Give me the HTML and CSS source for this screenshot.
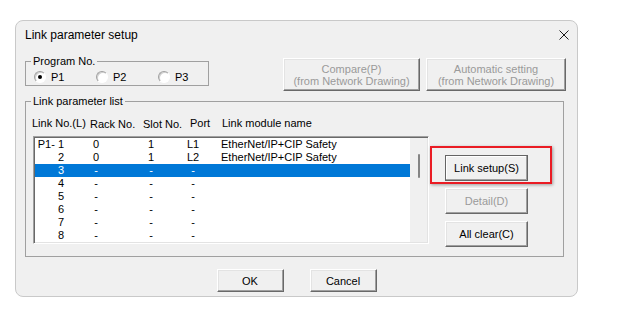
FILE: index.html
```html
<!DOCTYPE html>
<html>
<head>
<meta charset="utf-8">
<link rel="stylesheet" href="styles.css">
</head>
<body>
<div class="dialog">
  <div class="titlebar">
    <span class="title">Link parameter setup</span>
    <svg class="close" width="10" height="10" viewBox="0 0 10 10"><path d="M0.5 0.5 L9.5 9.5 M9.5 0.5 L0.5 9.5" stroke="#1a1a1a" stroke-width="1" fill="none"/></svg>
  </div>
  <div class="toprow">
    <fieldset class="group prog">
      <legend>Program No.</legend>
      <div class="radios">
        <label class="radio"><span class="circle checked"></span>P1</label>
        <label class="radio"><span class="circle"></span>P2</label>
        <label class="radio"><span class="circle"></span>P3</label>
      </div>
    </fieldset>
    <button class="btn disabled compare">Compare(P)<br>(from Network Drawing)</button>
    <button class="btn disabled auto">Automatic setting<br>(from Network Drawing)</button>
  </div>
  <fieldset class="group list">
    <legend>Link parameter list</legend>
    <div class="listarea">
      <div class="leftcol">
        <div class="headers">
          <span class="h h-link">Link No.(L)</span>
          <span class="h h-rack">Rack No.</span>
          <span class="h h-slot">Slot No.</span>
          <span class="h h-port">Port</span>
          <span class="h h-name">Link module name</span>
        </div>
        <div class="listbox">
          <div class="rows">
            <div class="row"><span class="c-num">P1- 1</span><span class="c-mid">0</span><span class="c-mid">1</span><span class="c-mid">L1</span><span class="c-name">EtherNet/IP+CIP Safety</span></div>
            <div class="row"><span class="c-num">2</span><span class="c-mid">0</span><span class="c-mid">1</span><span class="c-mid">L2</span><span class="c-name">EtherNet/IP+CIP Safety</span></div>
            <div class="row selected"><span class="c-num">3</span><span class="c-mid">-</span><span class="c-mid">-</span><span class="c-mid">-</span><span class="c-name"></span></div>
            <div class="row"><span class="c-num">4</span><span class="c-mid">-</span><span class="c-mid">-</span><span class="c-mid">-</span><span class="c-name"></span></div>
            <div class="row"><span class="c-num">5</span><span class="c-mid">-</span><span class="c-mid">-</span><span class="c-mid">-</span><span class="c-name"></span></div>
            <div class="row"><span class="c-num">6</span><span class="c-mid">-</span><span class="c-mid">-</span><span class="c-mid">-</span><span class="c-name"></span></div>
            <div class="row"><span class="c-num">7</span><span class="c-mid">-</span><span class="c-mid">-</span><span class="c-mid">-</span><span class="c-name"></span></div>
            <div class="row"><span class="c-num">8</span><span class="c-mid">-</span><span class="c-mid">-</span><span class="c-mid">-</span><span class="c-name"></span></div>
          </div>
          <div class="vscroll"><div class="thumb"></div></div>
        </div>
      </div>
      <div class="sidebtns">
        <div class="hl">
          <button class="btn side default">Link setup(S)</button>
          <span class="mark"></span>
        </div>
        <button class="btn side disabled">Detail(D)</button>
        <button class="btn side">All clear(C)</button>
      </div>
    </div>
  </fieldset>
  <div class="footer">
    <button class="btn foot">OK</button>
    <button class="btn foot">Cancel</button>
  </div>
</div>
</body>
</html>
```
FILE: styles.css
```css
html, body {
  margin: 0;
  padding: 0;
  background: #ffffff;
}
body {
  font-family: "Liberation Sans", Arial, sans-serif;
  font-size: 11px;
  line-height: 13px;
  color: #000;
}
.dialog {
  box-sizing: border-box;
  width: 563px;
  height: 277px;
  margin: 20px 0 0 15px;
  border: 1px solid #c9c9c9;
  border-radius: 8px;
  background: #f0f0f0;
}
.titlebar {
  height: 27px;
  display: flex;
  align-items: center;
  justify-content: space-between;
  padding: 0 8px 0 9px;
}
.title {
  font-size: 12px;
  line-height: 14px;
}
.close {
  display: block;
}
.toprow {
  display: flex;
  align-items: flex-start;
  padding-left: 9px;
  height: 44px;
}
.group {
  margin: 0;
  border: 1px solid #a0a0a0;
  min-width: 0;
  box-sizing: border-box;
}
.group legend {
  padding: 0 2px;
  line-height: 12px;
  height: 12px;
  font-size: 11px;
}
.prog {
  margin-top: 7px;
  width: 184px;
  height: 31px;
  padding: 4px 0 2px 5px;
}
.radios {
  display: flex;
  padding-left: 3px;
  height: 12px;
  align-items: center;
}
.radio {
  display: inline-flex;
  align-items: center;
  width: 62px;
  gap: 5px;
  line-height: 12px;
}
.radio:last-child {
  width: auto;
}
.circle {
  box-sizing: border-box;
  width: 12px;
  height: 12px;
  border-radius: 50%;
  background: #fff;
  border: 1px solid;
  border-color: #a0a0a0 #ffffff #ffffff #a0a0a0;
  box-shadow: inset 1px 1px 0 #d0d0d0;
  display: flex;
  align-items: center;
  justify-content: center;
}
.circle.checked::after {
  content: "";
  width: 4px;
  height: 4px;
  border-radius: 50%;
  background: #000;
}
.btn {
  box-sizing: border-box;
  font-family: "Liberation Sans", Arial, sans-serif;
  font-size: 11px;
  line-height: 12px;
  color: #000;
  background: #f0f0f0;
  border: 1px solid;
  border-color: #ffffff #696969 #696969 #ffffff;
  box-shadow: inset -1px -1px 0 #a0a0a0, inset 1px 1px 0 #e3e3e3;
  padding: 0;
  margin: 0;
  text-align: center;
}
.btn.disabled {
  color: #9a9a9a;
}
.compare {
  margin: 10px 0 0 74px;
  width: 137px;
  height: 33px;
}
.auto {
  margin: 10px 0 0 6px;
  width: 140px;
  height: 33px;
}
.list {
  margin: 3px 0 0 9px;
  width: 539px;
  height: 162px;
  padding: 10px 0 12px 5px;
}
.listarea {
  display: flex;
  align-items: flex-start;
}
.leftcol {
  display: flex;
  flex-direction: column;
}
.headers {
  display: flex;
  height: 13px;
  padding-left: 1px;
  margin-bottom: 6px;
}
.h {
  display: block;
  white-space: nowrap;
}
.h-link { width: 58px; }
.h-rack { width: 53px; padding-top: 1px; }
.h-slot { width: 47px; padding-top: 1px; }
.h-port { width: 32px; }
.listbox {
  margin-left: 2px;
  width: 396px;
  height: 108px;
  box-sizing: border-box;
  display: flex;
  border: 1px solid;
  border-color: #a0a0a0 #ffffff #ffffff #a0a0a0;
  box-shadow: inset 1px 1px 0 #696969, inset -1px -1px 0 #e3e3e3;
  padding: 1px;
}
.rows {
  width: 375px;
  background: #fff;
}
.row {
  display: grid;
  grid-template-columns: 30px 62px 48px 36px 1fr;
  height: 13px;
  line-height: 13px;
  white-space: nowrap;
}
.row.selected {
  background: #0078d7;
  color: #fff;
}
.c-num {
  text-align: right;
  padding-right: 1px;
}
.c-mid {
  text-align: center;
}
.c-name {
  padding-left: 10px;
}
.vscroll {
  flex: 1;
  background: #f0f0f0;
}
.thumb {
  margin: 16px 0 0 8px;
  width: 2px;
  height: 24px;
  background: #858585;
  border-radius: 1px;
}
.sidebtns {
  margin: 38px 0 0 16px;
  display: flex;
  flex-direction: column;
  gap: 7px;
}
.hl {
  position: relative;
  display: flex;
}
.side {
  width: 83px;
  height: 26px;
}
.btn.default {
  border-color: #646464;
  box-shadow: inset -1px -1px 0 #a0a0a0, inset 1px 1px 0 #ffffff;
}
.mark {
  position: absolute;
  left: -15px;
  top: -9px;
  width: 122px;
  height: 38px;
  box-sizing: border-box;
  border: 2px solid #ea1c24;
  box-shadow: 1px 1px 3px rgba(0, 0, 0, 0.35);
}
.footer {
  display: flex;
  justify-content: center;
  gap: 26px;
  margin-top: 12px;
}
.foot {
  width: 67px;
  height: 23px;
}
```
